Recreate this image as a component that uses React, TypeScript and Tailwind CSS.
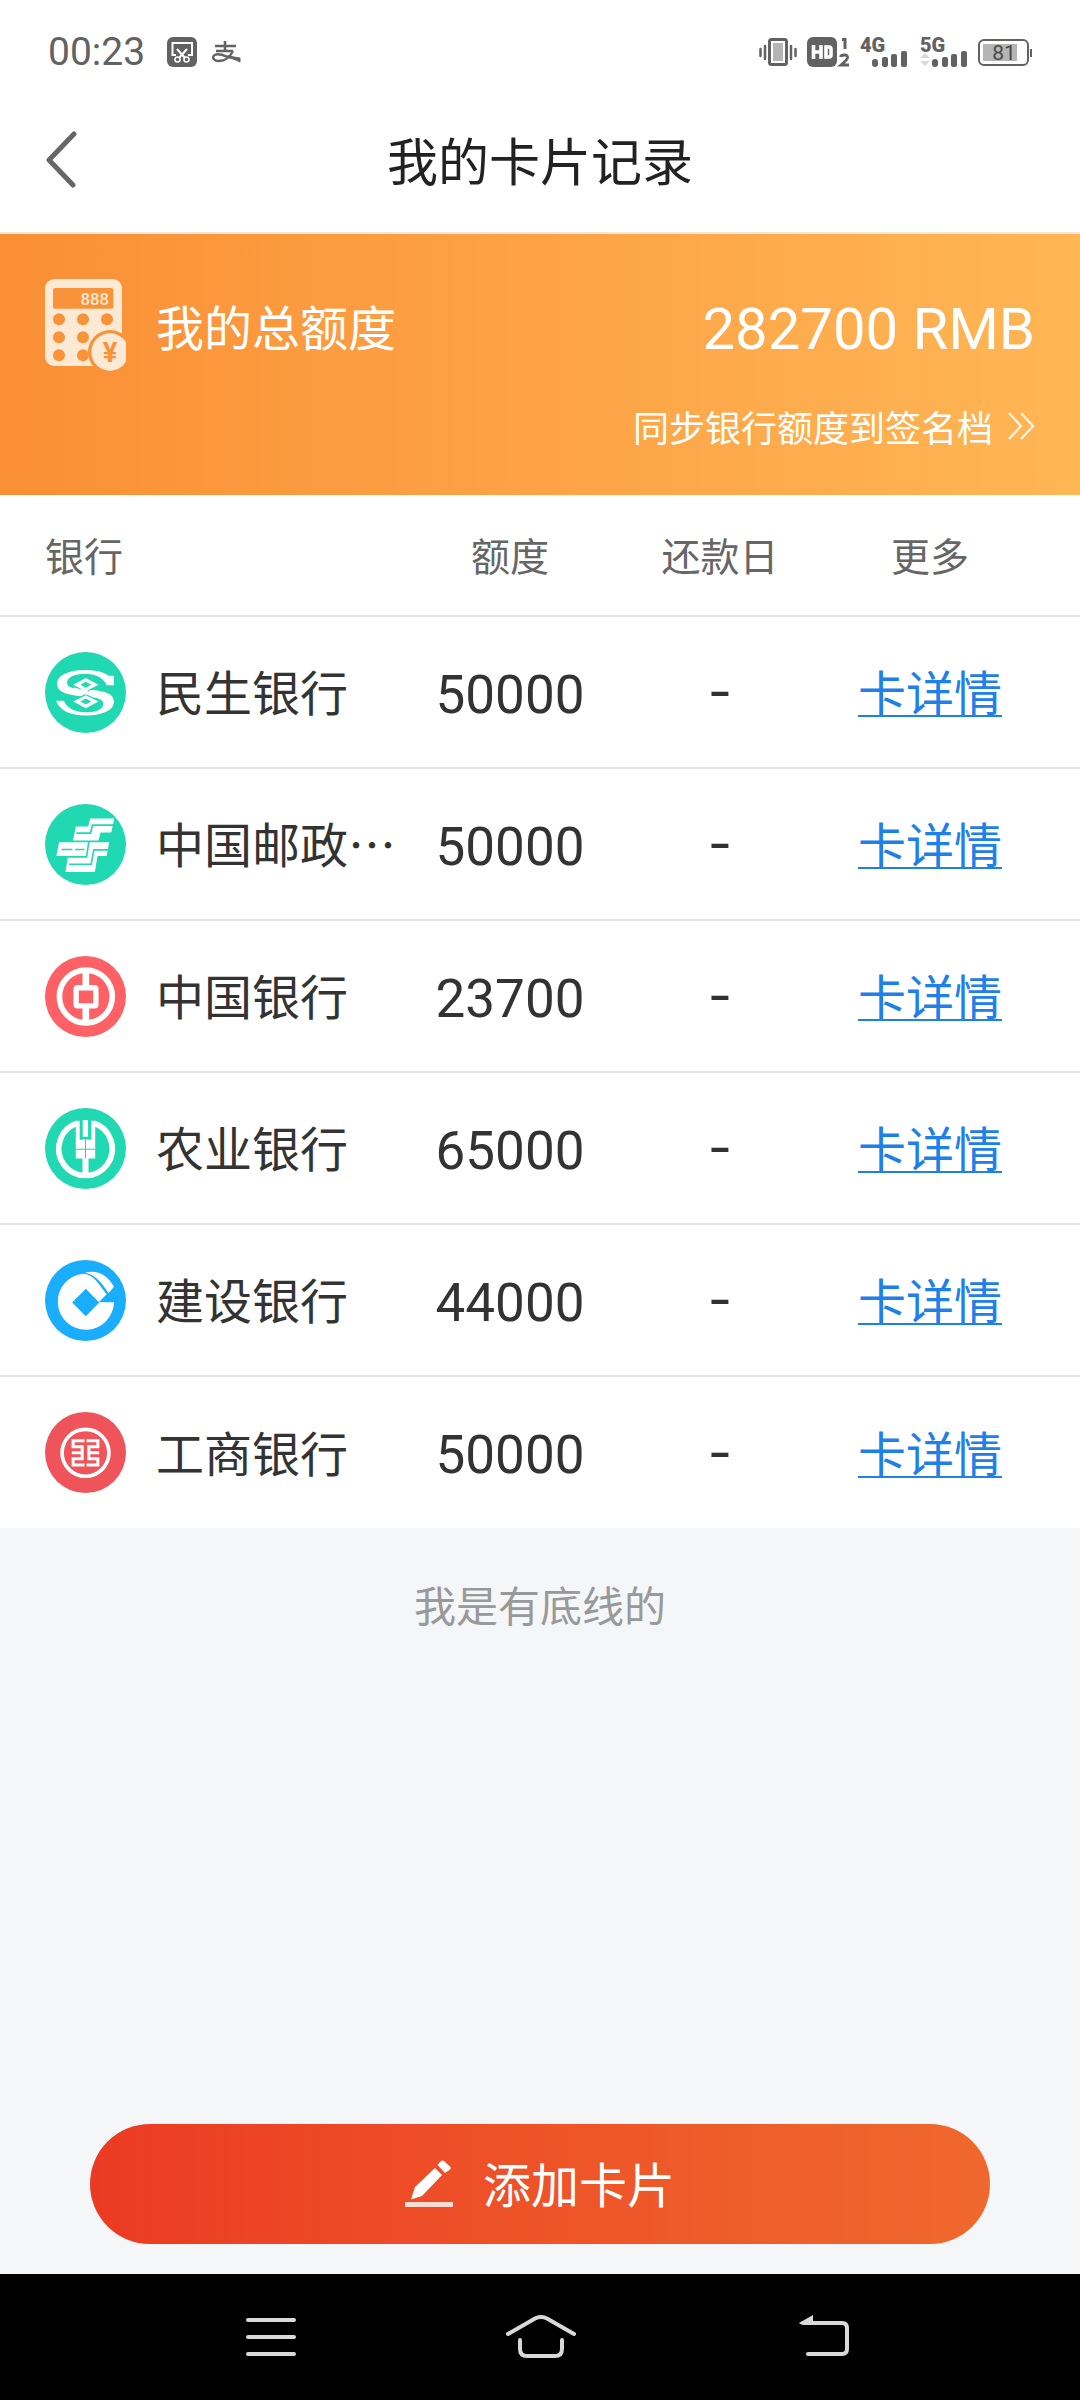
import type { ReactNode } from "react"

interface Card {
    id: string,
    name: string,
    limit: number,
    repayDay: string,
    logo: ReactNode
}

const MinshengLogo = () => (
    <svg viewBox="0 0 242 242" className="w-[81px] h-[81px] shrink-0" aria-hidden="true">
        <circle cx="121" cy="121" r="121" fill="#20d8b2" />
        <path d="M206 71V99H184C176 80 155 65 120 65C88 65 66 76 66 92C66 106 82 110 118 112C176 115 206 122 206 149C206 174 172 190 122 190C76 190 44 176 33 146H56C66 168 88 180 122 180C152 180 174 171 174 155C174 139 152 136 116 133C66 129 36 120 36 95C36 70 70 54 120 54C154 54 178 61 190 71Z" fill="#fff" />
        <path d="M122 74L164 97L122 121L80 97ZM122 124L164 148L122 172L80 148Z" fill="#20d8b2" />
        <path fillRule="evenodd" d="M122 78L160 98L122 117L84 98ZM122 89L106 98L122 107L138 98Z" fill="#fff" />
        <path fillRule="evenodd" d="M122 129L160 148L122 168L84 148ZM122 139L106 148L122 157L138 148Z" fill="#fff" />
        <path d="M84 112L122 121L164 130" stroke="#fff" strokeWidth="12" fill="none" />
    </svg>
)

const PostLogo = () => (
    <svg viewBox="0 0 242 242" className="w-[81px] h-[81px] shrink-0" aria-hidden="true">
        <circle cx="121" cy="121" r="121" fill="#20d8b2" />
        <g fill="#fff">
            <path d="M135 43H207L198 85H166L160 109H84L92 67H129Z" />
            <path d="M42 114H192L184 155H157L149 203H61L69 155H34Z" />
        </g>
        <g fill="none" stroke="#20d8b2" strokeWidth="5">
            <path d="M94 87H136L142 63H204" />
            <path d="M131 113L124 158H68" />
            <path d="M72 180H138L146 137H190" />
            <path d="M49 136H82M90 136H118" />
        </g>
    </svg>
)

const BocLogo = () => (
    <svg viewBox="0 0 242 242" className="w-[81px] h-[81px] shrink-0" aria-hidden="true">
        <circle cx="121" cy="121" r="121" fill="#fd6165" />
        <g fill="none" stroke="#fff">
            <circle cx="122" cy="121" r="79" strokeWidth="17" />
            <rect x="93" y="95" width="59" height="54" rx="4" strokeWidth="16" />
            <path d="M122 42V92M122 152V200" strokeWidth="20" />
        </g>
    </svg>
)

const AbcLogo = () => (
    <svg viewBox="0 0 242 242" className="w-[81px] h-[81px] shrink-0" aria-hidden="true">
        <circle cx="121" cy="121" r="121" fill="#20d8b2" />
        <path d="M98 45A80 80 0 1 0 144 45" fill="none" stroke="#fff" strokeWidth="17" />
        <g fill="#fff">
            <path d="M92 40L104 37V94H112V86H130V94H138V37L150 40V151H130V204H112V151H92Z" />
            <rect x="112" y="36" width="17" height="51" />
        </g>
        <path d="M92 123H150M121 94V151" stroke="#20d8b2" strokeWidth="3" />
        <path d="M108 36V90H134V36" fill="none" stroke="#20d8b2" strokeWidth="8" />
    </svg>
)

const CcbLogo = () => (
    <svg viewBox="0 0 242 242" className="w-[81px] h-[81px] shrink-0" aria-hidden="true">
        <circle cx="121" cy="121" r="121" fill="#1aadfc" />
        <g fill="#fff">
            <path d="M112 41C146 42 158 70 184 102L161 126H206A84 84 0 1 1 112 41Z" />
            <path d="M120 38C156 28 188 46 206 80L190 99C172 72 150 42 120 38Z" />
        </g>
        <path d="M122 86L162 127L122 168L81 127Z" fill="#1aadfc" />
    </svg>
)

const IcbcLogo = () => (
    <svg viewBox="0 0 242 242" className="w-[81px] h-[81px] shrink-0" aria-hidden="true">
        <circle cx="121" cy="121" r="121" fill="#ee545a" />
        <g fill="none" stroke="#fff">
            <circle cx="121" cy="122" r="70" strokeWidth="11" />
            <path d="M118 86H84V104H111V122H80M111 122V140H84V158H118" strokeWidth="9" />
            <path d="M124 86H158V104H131V122H162M131 122V140H158V158H124" strokeWidth="9" />
        </g>
    </svg>
)

const cards: Card[] = [
    { id: "cmbc", name: "民生银行", limit: 50000, repayDay: "-", logo: <MinshengLogo /> },
    { id: "psbc", name: "中国邮政…", limit: 50000, repayDay: "-", logo: <PostLogo /> },
    { id: "boc", name: "中国银行", limit: 23700, repayDay: "-", logo: <BocLogo /> },
    { id: "abc", name: "农业银行", limit: 65000, repayDay: "-", logo: <AbcLogo /> },
    { id: "ccb", name: "建设银行", limit: 44000, repayDay: "-", logo: <CcbLogo /> },
    { id: "icbc", name: "工商银行", limit: 50000, repayDay: "-", logo: <IcbcLogo /> },
]

const total = cards.reduce((sum, card) => sum + card.limit, 0)

const SignalBars = () => (
    <g fill="#626262">
        <rect x="12" y="22" width="6" height="8" rx="3" />
        <rect x="22" y="20" width="6" height="10" rx="2" />
        <rect x="31" y="17" width="6" height="13" rx="2" />
        <rect x="41" y="14" width="6" height="16" rx="2" />
    </g>
)

const StatusBar = () => (
    <div className="flex h-[85px] items-center justify-between px-12 pt-[18px] text-[#626262]">
        <div className="flex items-center">
            <span className="font-['Roboto',sans-serif] text-[39px] leading-10">00:23</span>
            <svg width="30" height="30" viewBox="0 0 30 30" className="ml-[22px]" fill="none" aria-hidden="true">
                <rect width="30" height="30" rx="6" fill="#626262" />
                <path d="M9 18H5.5V6H25V18H21" stroke="#fff" strokeWidth="2" />
                <path d="M10 12L18 21M20 12L12 21" stroke="#fff" strokeWidth="2" />
                <circle cx="10.500" cy="22.500" r="2.500" stroke="#fff" strokeWidth="1.600" />
                <circle cx="19.500" cy="22.500" r="2.500" stroke="#fff" strokeWidth="1.600" />
            </svg>
            <svg width="30" height="24" viewBox="0 0 30 24" className="ml-3.5" fill="none" stroke="#626262" aria-hidden="true">
                <path d="M4 6H25M14 1V12M5 11H22" strokeWidth="2.600" />
                <path d="M22 11C19 17 14 21 8 21C3 21 1 18 3 15.500C6 12.500 12 15 16 16.500L29 20" strokeWidth="2.400" />
                <path d="M17 16L29 18V22Z" fill="#626262" />
            </svg>
        </div>
        <div className="flex items-center">
            <svg width="38" height="28" viewBox="0 0 38 28" aria-hidden="true">
                <rect x="10.500" y="1.500" width="17" height="25" rx="2" fill="#fff" stroke="#626262" strokeWidth="3" />
                <rect x="14" y="5" width="10" height="18" fill="#b5b5b5" />
                <path d="M1.500 11V18M6 8V21M32 8V21M36.500 11V18" stroke="#626262" strokeWidth="2.500" strokeLinecap="round" />
            </svg>
            <svg width="43" height="30" viewBox="0 0 43 30" className="ml-2.5" role="img" aria-label="HD">
                <rect width="30" height="30" rx="6" fill="#626262" />
                <path d="M6.500 8V22M14 8V22M6.500 15H14" stroke="#fff" strokeWidth="3.600" fill="none" />
                <path d="M19 10H22Q24 10 24 12V18Q24 20 22 20H19Z" stroke="#fff" strokeWidth="3.600" fill="none" />
                <path d="M35 2.500H38V12" stroke="#626262" strokeWidth="3" fill="none" />
                <path d="M33.500 20Q34 18 37.500 18Q41 18 40.500 21Q40 23 34 28H42" stroke="#626262" strokeWidth="2.800" fill="none" />
            </svg>
            <svg width="48" height="46" viewBox="0 -8 48 46" className="ml-2.5" fill="#626262">
                <text x="0" y="15" fontFamily="Roboto, sans-serif" fontWeight="900" fontSize="20">4G</text>
                <SignalBars />
            </svg>
            <svg width="48" height="46" viewBox="0 -8 48 46" className="ml-3" fill="#626262">
                <text x="0" y="15" fontFamily="Roboto, sans-serif" fontWeight="900" fontSize="20">5G</text>
                <path d="M0 21L5 16L10 21ZM0 24H10L5 29Z" fill="#d8d8d8" />
                <SignalBars />
            </svg>
            <svg width="54" height="28" viewBox="0 0 54 28" className="ml-2.5">
                <rect x="1" y="2" width="49" height="25" rx="5" fill="#fff" stroke="#626262" strokeWidth="2" />
                <rect x="5" y="6" width="34" height="17" fill="#b5b5b5" />
                <rect x="52" y="11" width="2" height="8" fill="#626262" />
                <text x="26" y="22" textAnchor="middle" fontFamily="Roboto, sans-serif" fontSize="21" fill="#4a4a4a">81</text>
            </svg>
        </div>
    </div>
)

const CalculatorIcon = () => (
    <svg viewBox="0 0 243 276" className="h-[92px] w-[81px] shrink-0">
        <rect width="231" height="261" rx="28" fill="#fee9d5" />
        <g fill="#f99339">
            <rect x="24" y="27" width="181" height="62" rx="6" />
            <circle cx="42" cy="121" r="18" />
            <circle cx="114" cy="121" r="18" />
            <circle cx="186" cy="121" r="18" />
            <circle cx="42" cy="175" r="18" />
            <circle cx="114" cy="175" r="18" />
            <circle cx="42" cy="229" r="18" />
            <circle cx="114" cy="229" r="18" />
            <circle cx="195" cy="219" r="66" />
        </g>
        <circle cx="195" cy="219" r="56" fill="#fee9d5" />
        <text x="192" y="79" textAnchor="end" fontFamily="Roboto, sans-serif" fontWeight="500" fontSize="50" fill="#fee9d5">888</text>
        <text x="195" y="248" textAnchor="middle" fontFamily="Roboto, sans-serif" fontWeight="700" fontSize="82" fill="#f99339">¥</text>
    </svg>
)

const CardTable = () => (
    <table className="w-full table-fixed border-collapse bg-white text-5xl text-[#333]">
        <thead>
            <tr className="h-[121px] border-b-2 border-[#e4e4e4] text-[39px] leading-[56px] text-[#666]">
                <th scope="col" className="pb-0.5 pl-[45px] text-left font-normal">银行</th>
                <th scope="col" className="w-[210px] pb-0.5 font-normal">额度</th>
                <th scope="col" className="w-[210px] pb-0.5 font-normal">还款日</th>
                <th scope="col" className="w-[255px] pr-[45px] pb-0.5 font-normal">更多</th>
            </tr>
        </thead>
        <tbody>
            {cards.map((card) => (
                <tr key={card.id} className="h-[152px] border-b-2 border-[#e4e4e4] text-center leading-[70px] last:border-b-0">
                    <td className="pl-[45px]">
                        <div className="flex items-center gap-[30px] whitespace-nowrap text-left">
                            {card.logo}
                            <span className="pb-1">{card.name}</span>
                        </div>
                    </td>
                    <td className="pt-0.5">
                        <span className="font-['Roboto',sans-serif] text-[53px]">{card.limit}</span>
                    </td>
                    <td className="pb-1">
                        <span className="font-['Inter',sans-serif] text-[53px]">{card.repayDay}</span>
                    </td>
                    <td className="pr-[45px] pb-1">
                        <a href={`#${card.id}`} className="text-[#1e80e8] underline decoration-2 underline-offset-4">卡详情</a>
                    </td>
                </tr>
            ))}
        </tbody>
    </table>
)

const SystemNav = () => (
    <nav className="grid h-[126px] grid-cols-3 items-center bg-black pr-[134px] pl-[136px]">
        <button type="button" aria-label="菜单" className="flex justify-center">
            <svg width="50" height="44" viewBox="0 0 50 44" stroke="#d9d9d9" strokeWidth="4" strokeLinecap="round" aria-hidden="true">
                <path d="M2 5H48M2 22H48M2 39H48" />
            </svg>
        </button>
        <button type="button" aria-label="主页" className="flex justify-center">
            <svg width="70" height="44" viewBox="0 0 70 44" fill="none" stroke="#d9d9d9" strokeWidth="4" strokeLinecap="round" aria-hidden="true">
                <path d="M2 19L29 3.500Q35 0.500 41 3.500L68 19" />
                <path d="M14 25V34Q14 41 21 41H49Q56 41 56 34V25" />
            </svg>
        </button>
        <button type="button" aria-label="返回" className="flex justify-center">
            <svg width="76" height="44" viewBox="0 0 76 44" fill="none" stroke="#d9d9d9" strokeWidth="4" strokeLinecap="round" aria-hidden="true">
                <path d="M30 8H69Q74 8 74 13V34Q74 39 69 39H35" />
                <path d="M26 8L40 0V9H27Z" fill="#d9d9d9" stroke="none" />
            </svg>
        </button>
    </nav>
)

export default function App() {
    return (
        <div lang="zh-CN" className="flex min-h-screen flex-col bg-[#f4f6f8] font-['Noto_Sans_CJK_SC',sans-serif]">
            <div className="bg-white">
                <StatusBar />
                <header className="grid h-[149px] grid-cols-[1fr_auto_1fr] items-center border-b-2 border-[#f3e6da] px-[45px]">
                    <button type="button" aria-label="返回上一页" className="justify-self-start">
                        <svg width="32" height="58" viewBox="0 0 32 58" fill="none" stroke="#666" strokeWidth="5" strokeLinecap="round" strokeLinejoin="round" aria-hidden="true">
                            <path d="M29 4L4 30L28 55" />
                        </svg>
                    </button>
                    <h1 className="text-[51px] leading-[74px] text-[#222]">我的卡片记录</h1>
                </header>
            </div>

            <section className="bg-linear-to-r from-[#fa8f35] to-[#ffb655] px-[45px] pt-[45px] pb-[42px] text-white">
                <div className="flex items-center gap-[30px]">
                    <CalculatorIcon />
                    <div className="flex flex-1 items-center justify-between">
                        <h2 className="text-5xl leading-[70px]">我的总额度</h2>
                        <p className="pt-2 font-['Roboto',sans-serif] text-[58px] leading-[70px]">{total} RMB</p>
                    </div>
                </div>
                <div className="mt-7 flex justify-end">
                    <a href="#sync" className="flex items-center gap-[15px] text-4xl leading-[54px]">
                        同步银行额度到签名档
                        <svg width="27" height="28" viewBox="0 0 27 28" fill="none" stroke="#fff" strokeWidth="2.500" opacity="0.800" aria-hidden="true">
                            <path d="M1 1L13 14L1 27M13 1L25 14L13 27" />
                        </svg>
                    </a>
                </div>
            </section>

            <main className="flex-1">
                <CardTable />
                <p className="mt-[46px] text-center text-[42px] leading-[60px] text-[#999]">我是有底线的</p>
            </main>

            <div className="px-[90px] pb-[30px]">
                <button type="button" className="flex h-[120px] w-full items-center justify-center gap-[30px] rounded-full bg-linear-to-r from-[#eb3a23] to-[#f0682d] text-5xl leading-[70px] text-white">
                    <svg width="48" height="48" viewBox="0 0 48 48" fill="#fff" aria-hidden="true">
                        <path d="M10 27L30 8L37 15L17 36L6 39.500Z" />
                        <path d="M32.500 5L36 1Q37.500 0 39 1L45 6.500Q46.500 8 45 9.500L40 13Z" />
                        <rect y="42" width="48" height="5" opacity="0.800" />
                    </svg>
                    <span className="pb-1">添加卡片</span>
                </button>
            </div>
            <SystemNav />
        </div>
    )
}
